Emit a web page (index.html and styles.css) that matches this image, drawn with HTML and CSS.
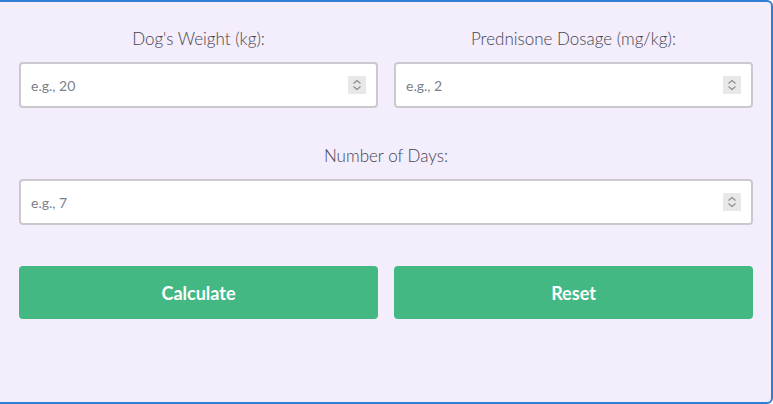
FILE: index.html
```html
<!DOCTYPE html>
<html lang="en">
<head>
<meta charset="utf-8">
<title>Prednisone Dosage Calculator</title>
<link rel="stylesheet" href="styles.css">
</head>
<body>
<div class="calc">
  <div class="row two">
    <div class="field">
      <label class="label" for="w">Dog's Weight (kg):</label>
      <div class="box">
        <input id="w" class="input" type="text" placeholder="e.g., 20">
        <span class="spin"><svg viewBox="0 0 18 18" width="18" height="18"><path d="M5.5 7.5 L9 4.5 L12.5 7.5 M5.5 10.5 L9 13.5 L12.5 10.5" fill="none" stroke="#8a8a8a" stroke-width="1.1"/></svg></span>
      </div>
    </div>
    <div class="field">
      <label class="label" for="d">Prednisone Dosage (mg/kg):</label>
      <div class="box">
        <input id="d" class="input" type="text" placeholder="e.g., 2">
        <span class="spin"><svg viewBox="0 0 18 18" width="18" height="18"><path d="M5.5 7.5 L9 4.5 L12.5 7.5 M5.5 10.5 L9 13.5 L12.5 10.5" fill="none" stroke="#8a8a8a" stroke-width="1.1"/></svg></span>
      </div>
    </div>
  </div>
  <div class="row one">
    <div class="field">
      <label class="label" for="n">Number of Days:</label>
      <div class="box">
        <input id="n" class="input" type="text" placeholder="e.g., 7">
        <span class="spin"><svg viewBox="0 0 18 18" width="18" height="18"><path d="M5.5 7.5 L9 4.5 L12.5 7.5 M5.5 10.5 L9 13.5 L12.5 10.5" fill="none" stroke="#8a8a8a" stroke-width="1.1"/></svg></span>
      </div>
    </div>
  </div>
  <div class="row two buttons">
    <button class="btn">Calculate</button>
    <button class="btn">Reset</button>
  </div>
</div>
</body>
</html>
```
FILE: styles.css
```css
* { box-sizing: border-box; }
html, body { margin: 0; padding: 0; background: #ffffff; }
body { font-family: "Lato", "Liberation Sans", sans-serif; overflow: hidden; }

.calc {
  width: 775px;
  height: 404px;
  margin-left: -2px;
  background: #f3edfc;
  border: 2px solid #2e7fd4;
  border-radius: 0 6px 6px 0;
  padding: 25px 18px 0 19px;
}

.row { display: grid; gap: 16px; }
.row.two { grid-template-columns: 1fr 1fr; }
.row.one { margin-top: 36px; grid-template-columns: 1fr; }
.row.buttons { margin-top: 41px; }

.field { display: flex; flex-direction: column; }
.label {
  display: block;
  text-align: center;
  font-size: 17px;
  line-height: 24px;
  font-weight: 300;
  color: #45454d;
  margin-bottom: 11px;
}
.row.one .label { margin-bottom: 11px; }

.box {
  display: flex;
  align-items: center;
  height: 46px;
  background: #ffffff;
  border: 2px solid #cbc8ce;
  border-radius: 4px;
  padding: 0 10px 0 10px;
}
.input {
  flex: 1;
  min-width: 0;
  border: 0;
  outline: 0;
  background: transparent;
  font-family: "Lato", "Liberation Sans", sans-serif;
  font-size: 14px;
  color: #333;
  padding: 0;
}
.input::placeholder { color: #7b808c; }
.spin {
  display: flex;
  width: 18px;
  height: 18px;
  background: #e8e8ea;
}

.btn {
  height: 53px;
  border: 0;
  border-radius: 4px;
  background: #43b883;
  color: #ffffff;
  font-family: "Lato", "Liberation Sans", sans-serif;
  font-weight: 700;
  font-size: 18px;
  cursor: pointer;
}
```
